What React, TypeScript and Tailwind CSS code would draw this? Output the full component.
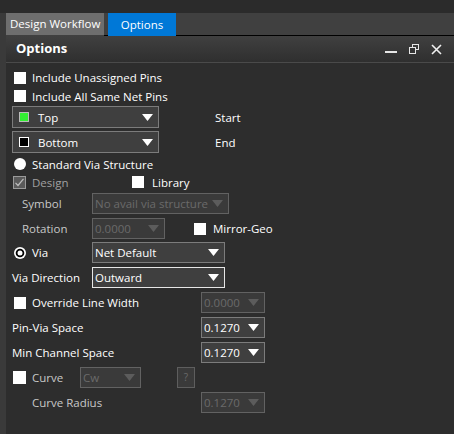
import React from "react";

const FONT = { fontFamily: '"Open Sans", "Noto Sans", sans-serif' };

function Tri({ disabled }: { disabled?: boolean }) {
  return (
    <svg width="11" height="7" viewBox="0 0 11 7" className="shrink-0">
      <path d="M0 0H11L5.5 7Z" fill={disabled ? "#5c5c5c" : "#ffffff"} />
    </svg>
  );
}

function Drop({
  className,
  disabled,
  focused,
  children,
}: {
  className: string;
  disabled?: boolean;
  focused?: boolean;
  children: React.ReactNode;
}) {
  const border = focused
    ? "border-[#e6e6e6]"
    : disabled
    ? "border-[#626262]"
    : "border-[#7c7c7c]";
  const bg = disabled ? "bg-[#3a3a3a]" : "bg-[#3f3f3f]";
  const text = disabled ? "text-[#6a6a6a]" : "text-white";
  return (
    <div
      className={`${className} ${border} ${bg} ${text} shrink-0 border flex items-center justify-between pl-[2px] pr-[5px] text-[11.5px] leading-[15px]`}
    >
      <div className="flex items-center whitespace-nowrap">{children}</div>
      <Tri disabled={disabled} />
    </div>
  );
}

function Box({ className = "" }: { className?: string }) {
  return <span className={`block w-[12px] h-[12px] bg-white shrink-0 ${className}`} />;
}

function RadioFull() {
  return (
    <svg width="12" height="12" viewBox="0 0 12 12" className="shrink-0">
      <circle cx="6" cy="6" r="6" fill="#fff" />
    </svg>
  );
}

function RadioOn() {
  return (
    <svg width="12" height="12" viewBox="0 0 12 12" className="shrink-0">
      <circle cx="6" cy="6" r="6" fill="#fff" />
      <circle cx="6" cy="6" r="4.3" fill="#000" />
      <circle cx="6" cy="6" r="2.5" fill="#fff" />
    </svg>
  );
}

function DisabledCheck() {
  return (
    <svg width="13" height="13" viewBox="0 0 13 13" className="shrink-0">
      <rect x="0.5" y="0.5" width="12" height="12" fill="#5a5a5a" stroke="#9a9a9a" />
      <path d="M2.5 6.8L5 9.5L10.5 2.8" fill="none" stroke="#bdbdbd" strokeWidth="1.2" />
    </svg>
  );
}

export default function App() {
  return (
    <div className="w-[454px] h-[434px] overflow-hidden bg-[#2d2d2d] flex flex-col" style={FONT}>
      <div className="h-[13px] bg-[#2b2b2b] shrink-0" />
      <div className="flex flex-1 min-h-0">
        <div className="w-[6px] bg-[#3a3a3a] shrink-0" />
        <div className="flex-1 flex flex-col min-w-0">
          {/* tabs */}
          <div className="h-[23px] flex bg-[#404040] shrink-0">
            <div className="w-[98px] h-[22px] bg-[#6e6e6e] text-white text-[11.5px] flex items-center pl-[4px] whitespace-nowrap">
              Design Workflow
            </div>
            <div className="w-[4px] border-b border-black h-full" />
            <div className="w-[68px] h-full bg-[#0078d7] text-white text-[11.5px] flex items-center justify-center">
              Options
            </div>
            <div className="flex-1 border-b border-black h-full" />
          </div>
          {/* header */}
          <div className="h-[27px] shrink-0 flex items-center border-b border-[#4a4a4a] bg-gradient-to-b from-[#404040] to-[#2f2f2f] pl-[10px] pr-[12px]">
            <span className="text-white font-bold text-[13px]">Options</span>
            <div className="ml-auto flex items-center gap-[12px]">
              <svg width="12" height="12" viewBox="0 0 12 12">
                <rect x="0" y="8" width="12" height="2" fill="#e6e6e6" />
              </svg>
              <svg width="10" height="10" viewBox="0 0 10 10">
                <rect x="3.5" y="0.5" width="6" height="5" fill="none" stroke="#e6e6e6" />
                <rect x="0.5" y="3.5" width="6" height="6" fill="#333" stroke="#e6e6e6" />
              </svg>
              <svg width="11" height="11" viewBox="0 0 11 11">
                <path d="M1 1L10 10M10 1L1 10" stroke="#f0f0f0" strokeWidth="1.6" />
              </svg>
            </div>
          </div>
          {/* content */}
          <div className="flex flex-col pt-[5px] text-[11.5px] text-white leading-[15px] whitespace-nowrap">
            <div className="h-[19px] flex items-center">
              <Box className="ml-[8px]" />
              <span className="ml-[6px]">Include Unassigned Pins</span>
            </div>
            <div className="h-[18px] flex items-center">
              <Box className="ml-[8px]" />
              <span className="ml-[6px]">Include All Same Net Pins</span>
            </div>
            <div className="mt-[1px] h-[22px] flex items-center">
              <Drop className="ml-[6px] w-[147px] h-[22px]">
                <span className="ml-[4px] w-[10px] h-[10px] bg-[#33ee33] border border-[#bbbbbb] shrink-0" />
                <span className="ml-[9px]">Top</span>
              </Drop>
              <span className="ml-[56px]">Start</span>
            </div>
            <div className="mt-[3px] h-[22px] flex items-center">
              <Drop className="ml-[6px] w-[147px] h-[22px]">
                <span className="ml-[4px] w-[10px] h-[10px] bg-black border border-white shrink-0" />
                <span className="ml-[9px]">Bottom</span>
              </Drop>
              <span className="ml-[56px]">End</span>
            </div>
            <div className="mt-[2px] h-[18px] flex items-center">
              <span className="ml-[8px]">
                <RadioFull />
              </span>
              <span className="ml-[6px]">Standard Via Structure</span>
            </div>
            <div className="h-[18px] flex items-center">
              <div className="ml-[7px] w-[119px] flex items-center shrink-0">
                <DisabledCheck />
                <span className="ml-[6px] text-[#a0a0a0]">Design</span>
              </div>
              <Box />
              <span className="ml-[8px]">Library</span>
            </div>
            <div className="mt-[2px] h-[21px] flex items-center">
              <span className="ml-[16px] w-[70px] shrink-0 text-[#c8c8c8]">Symbol</span>
              <Drop className="w-[137px] h-[21px]" disabled>
                No avail via structure
              </Drop>
            </div>
            <div className="mt-[4px] h-[21px] flex items-center">
              <span className="ml-[16px] w-[70px] shrink-0 text-[#c8c8c8]">Rotation</span>
              <Drop className="w-[73px] h-[21px]" disabled>
                0.0000
              </Drop>
              <Box className="ml-[29px]" />
              <span className="ml-[7px]">Mirror-Geo</span>
            </div>
            <div className="mt-[3px] h-[21px] flex items-center">
              <div className="ml-[8px] w-[78px] flex items-center shrink-0">
                <RadioOn />
                <span className="ml-[6px]">Via</span>
              </div>
              <Drop className="w-[133px] h-[21px]">Net Default</Drop>
            </div>
            <div className="mt-[4px] h-[21px] flex items-center">
              <span className="ml-[6px] w-[80px] shrink-0">Via Direction</span>
              <Drop className="w-[133px] h-[21px]" focused>
                Outward
              </Drop>
            </div>
            <div className="mt-[4px] h-[21px] flex items-center">
              <div className="ml-[8px] w-[187px] flex items-center shrink-0">
                <Box />
                <span className="ml-[6px]">Override Line Width</span>
              </div>
              <Drop className="w-[64px] h-[21px]" disabled>
                0.0000
              </Drop>
            </div>
            <div className="mt-[4px] h-[21px] flex items-center">
              <span className="ml-[6px] w-[189px] shrink-0">Pin-Via Space</span>
              <Drop className="w-[64px] h-[21px]">0.1270</Drop>
            </div>
            <div className="mt-[4px] h-[21px] flex items-center">
              <span className="ml-[6px] w-[189px] shrink-0">Min Channel Space</span>
              <Drop className="w-[64px] h-[21px]">0.1270</Drop>
            </div>
            <div className="mt-[4px] h-[21px] flex items-center">
              <div className="ml-[7px] w-[67px] flex items-center shrink-0">
                <Box className="w-[13px] h-[13px]" />
                <span className="ml-[6px] text-[#c8c8c8]">Curve</span>
              </div>
              <Drop className="w-[61px] h-[21px]" disabled>
                Cw
              </Drop>
              <div className="ml-[36px] w-[18px] h-[21px] border border-[#5e5e5e] bg-[#3a3a3a] text-[#6a6a6a] text-[10px] flex items-center justify-center shrink-0">
                ?
              </div>
            </div>
            <div className="mt-[4px] h-[21px] flex items-center">
              <span className="ml-[26px] w-[169px] shrink-0 text-[#c8c8c8]">Curve Radius</span>
              <Drop className="w-[64px] h-[21px]" disabled>
                0.1270
              </Drop>
            </div>
          </div>
        </div>
      </div>
    </div>
  );
}
